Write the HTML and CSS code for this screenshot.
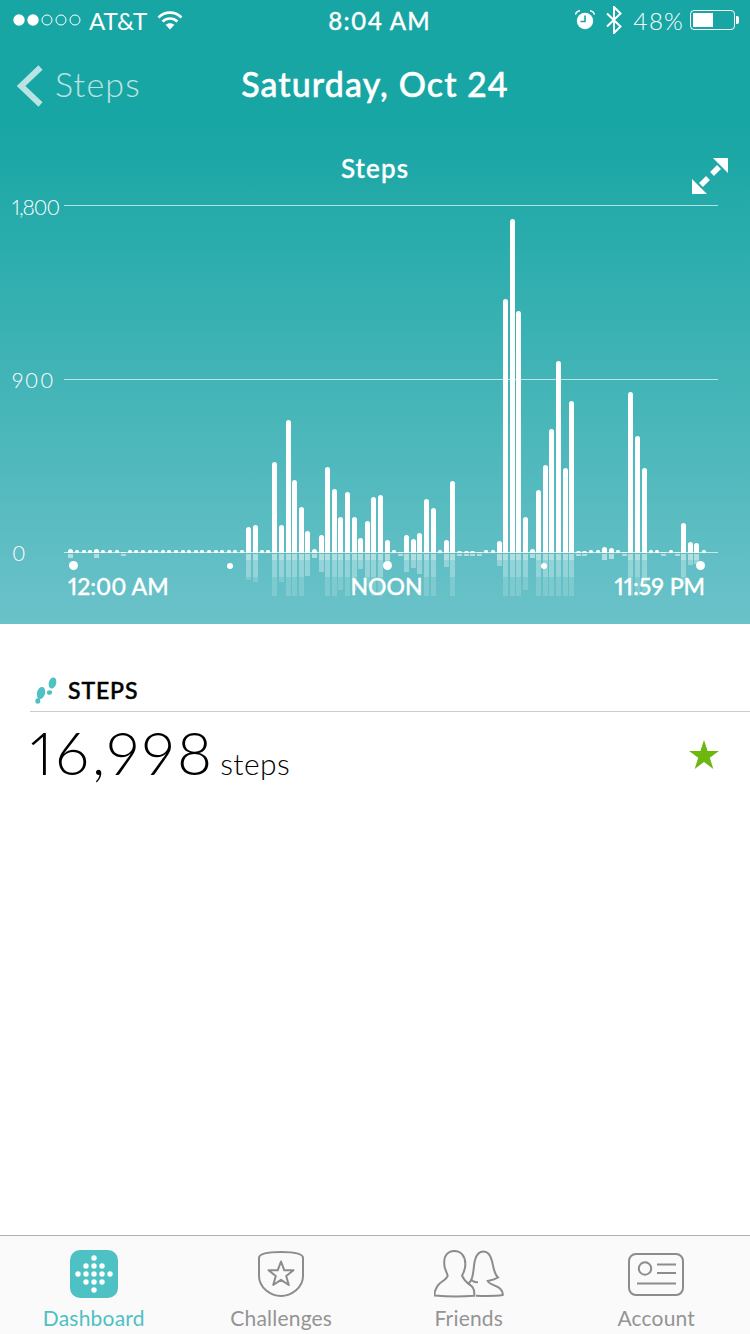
FILE: index.html
```html
<!DOCTYPE html>
<html lang="en">
<head>
    <meta charset="UTF-8">
    <meta name="viewport" content="width=device-width, initial-scale=1.0">
    <title>Steps</title>
    <link rel="stylesheet" href="styles.css">
</head>
<body>
    <header class="hero">
        <div class="status-bar">
            <div class="status-left">
                <svg class="signal" viewBox="0 0 68 12" width="68" height="12">
                    <circle cx="6" cy="6" r="5.7" fill="#fff"/>
                    <circle cx="20" cy="6" r="5.7" fill="#fff"/>
                    <circle cx="34" cy="6" r="5" fill="none" stroke="#fff" stroke-width="1"/>
                    <circle cx="48" cy="6" r="5" fill="none" stroke="#fff" stroke-width="1"/>
                    <circle cx="62" cy="6" r="5" fill="none" stroke="#fff" stroke-width="1"/>
                </svg>
                <span class="carrier">AT&amp;T</span>
                <svg class="wifi" viewBox="0 0 26 20" width="26" height="20">
                    <path d="M1.5 7.5C8 1 18 1 24.5 7.5" fill="none" stroke="#fff" stroke-width="2.6"/>
                    <path d="M5.5 11.5C9.8 7.4 16.2 7.4 20.5 11.5" fill="none" stroke="#fff" stroke-width="2.6"/>
                    <path d="M13 19.5L8.6 14.8C11 12.6 15 12.6 17.4 14.8Z" fill="#fff"/>
                </svg>
            </div>
            <span class="clock">8:04 AM</span>
            <div class="status-right">
                <svg class="alarm" viewBox="0 0 20 20" width="20" height="20">
                    <circle cx="10" cy="11" r="8.2" fill="#fff"/>
                    <path d="M10 5.5V11.5H5.5" fill="none" stroke="#18a6a4" stroke-width="1.6"/>
                    <path d="M.5 4.5C1 2 2.5 1 5 .7M19.5 4.5C19 2 17.500 1 15 .7" fill="none" stroke="#fff" stroke-width="1.5"/>
                </svg>
                <svg class="bluetooth" viewBox="0 0 16 28" width="16" height="28">
                    <path d="M1 7.500L14.500 20.500L8 27V1L14.500 7.500L1 20.500" fill="none" stroke="#fff" stroke-width="2"/>
                </svg>
                <span class="battery-text">48%</span>
                <div class="battery"><div class="battery-fill"></div></div>
            </div>
        </div>

        <nav class="nav-row">
            <a class="back">
                <svg viewBox="0 0 26 42" width="26" height="42">
                    <path d="M23.500 2.500L4 21L23.500 39.500" fill="none" stroke="#fff" stroke-width="6"/>
                </svg>
                <span>Steps</span>
            </a>
            <h1>Saturday, Oct 24</h1>
        </nav>

        <section class="chart">
            <div class="chart-head">
                <h2>Steps</h2>
                <svg class="expand" viewBox="0 0 36 36" width="36" height="36">
                    <path d="M21 0H36V15Z M15 36H0V21Z" fill="#fff"/>
                    <path d="M20 16L27 9M9 27L16 20" fill="none" stroke="#fff" stroke-width="5.500"/>
                </svg>
            </div>
            <div class="plot">
                <div class="grid-row"><span class="label-top">1,800</span><i></i></div>
                <div class="grid-row"><span class="label-mid">900</span><i></i></div>
                <div class="grid-row"><span>0</span><i></i></div>
                <div class="bars" id="bars"></div>
                <div class="reflection" id="reflection"></div>
            </div>
            <div class="ticks">
                <i class="tick-big"></i><i></i><i class="tick-big"></i><i></i><i class="tick-big"></i>
            </div>
            <div class="time-labels">
                <span>12:00 AM</span>
                <span>NOON</span>
                <span>11:59 PM</span>
            </div>
        </section>
    </header>

    <main class="details">
        <div class="details-head">
            <svg viewBox="0 0 24 28" width="24" height="28">
                <ellipse cx="7" cy="17" rx="4" ry="6.200" transform="rotate(15 7 17)" fill="#4dc1c3"/>
                <ellipse cx="3.800" cy="25" rx="2.500" ry="2.700" fill="#4dc1c3"/>
                <ellipse cx="18.500" cy="7" rx="3.700" ry="5.700" transform="rotate(15 18.500 7)" fill="#4dc1c3"/>
                <ellipse cx="15.500" cy="16.500" rx="2.600" ry="2.300" fill="#4dc1c3"/>
            </svg>
            <span>STEPS</span>
        </div>
        <div class="details-row">
            <div class="total"><strong>16,998</strong> <span>steps</span></div>
            <svg class="star" viewBox="0 0 30 30" width="30" height="30">
                <path d="M15 0L18.600 10.900H30L20.800 17.700L24.300 28.900L15 22L5.700 28.900L9.200 17.700L0 10.900H11.400Z" fill="#6db80f"/>
            </svg>
        </div>
    </main>

    <footer class="tabs">
        <a class="tab active">
            <svg viewBox="0 0 48 48" width="48" height="48">
                <rect width="48" height="48" rx="10" fill="#4dc1c3"/>
                <g fill="#fff">
                    <circle cx="24" cy="8" r="2.700"/>
                    <circle cx="16" cy="16" r="2.700"/><circle cx="24" cy="16" r="2.700"/><circle cx="32" cy="16" r="2.700"/>
                    <circle cx="8" cy="24" r="2.700"/><circle cx="16" cy="24" r="2.700"/><circle cx="24" cy="24" r="2.700"/><circle cx="32" cy="24" r="2.700"/><circle cx="40" cy="24" r="2.700"/>
                    <circle cx="16" cy="32" r="2.700"/><circle cx="24" cy="32" r="2.700"/><circle cx="32" cy="32" r="2.700"/>
                    <circle cx="24" cy="40" r="2.700"/>
                </g>
            </svg>
            <span>Dashboard</span>
        </a>
        <a class="tab">
            <svg viewBox="0 0 48 48" width="48" height="48">
                <path d="M2 8C2 3 12 2 24 2S46 3 46 8V26C46 38 34 46 24 46S2 38 2 26Z" fill="none" stroke="#8c8c8c" stroke-width="2"/>
                <path d="M24 11.500L27.300 20.300H36.500L29.200 26L31.800 35L24 29.800L16.200 35L18.800 26L11.500 20.300H20.700Z" fill="none" stroke="#8c8c8c" stroke-width="2" stroke-linejoin="round"/>
            </svg>
            <span>Challenges</span>
        </a>
        <a class="tab">
            <svg viewBox="0 0 70 48" width="70" height="48">
                <path d="M20.300 1C13.500 1 9.800 6.500 10.300 12.300C9.500 17 11.500 19 13.700 25.700C12 31 4 32 2 39C.8 41 .3 43 .8 45.500C10 46.300 30 46.500 40.300 45.700C40.500 42 40.500 39.500 38.700 37.300C36 34 31 33 28 25.700C30 22 31.500 18 31.300 14C31.500 6.500 27 1 20.300 1Z" fill="none" stroke="#8c8c8c" stroke-width="2"/>
                <path d="M33.500 34C35 33 37.500 31 38 28C40 22 39.500 15 41 10C42.500 4.500 45.500 1.500 49.500 1.500C53.500 1.500 56.500 5 58 11C59.500 17 60 24 64 27.500C60 30 56 30.500 53.700 31C55 34.500 62 35 66 38.500C68 40.500 69 43 68.700 45C62 46 50 46 42 45.700" fill="none" stroke="#8c8c8c" stroke-width="2"/>
                <path d="M38 30.500C40 32 42 32.500 44 32" fill="none" stroke="#8c8c8c" stroke-width="2"/>
            </svg>
            <span>Friends</span>
        </a>
        <a class="tab">
            <svg viewBox="0 0 56 48" width="56" height="48">
                <rect x="1" y="4" width="54" height="41" rx="7" fill="none" stroke="#8c8c8c" stroke-width="2"/>
                <circle cx="17" cy="18.500" r="6.200" fill="none" stroke="#8c8c8c" stroke-width="2"/>
                <path d="M29 14.500H48M29 23H48M9 33.500H48" fill="none" stroke="#8c8c8c" stroke-width="2"/>
            </svg>
            <span>Account</span>
        </a>
    </footer>

    <script src="script.js"></script>
</body>
</html>
```

FILE: styles.css
```css
* {
    box-sizing: border-box;
}

body {
    width: 750px;
    height: 1334px;
    margin: 0;
    display: flex;
    flex-direction: column;
    overflow: hidden;
    background-color: white;
    font-family: Lato, "Open Sans", sans-serif;
    font-variant-numeric: proportional-nums;
    color: black;
}

h1, h2 {
    margin: 0;
}

svg {
    display: block;
}

.hero {
    height: 624px;
    color: white;
    background: linear-gradient(#18a6a4 0, #18a6a4 130px, #6bc2c9 624px);
}

.status-bar {
    height: 40px;
    padding: 0 11px 0 13px;
    display: grid;
    grid-template-columns: 1fr auto 1fr;
    align-items: center;
    font-size: 24px;
}

.status-left,
.status-right {
    display: flex;
    align-items: center;
}

.status-right {
    justify-content: flex-end;
}

.carrier {
    margin-left: 8px;
}

.clock {
    margin-left: 7px;
    font-weight: 500;
    letter-spacing: 1.2px;
    -webkit-text-stroke: 0.3px white;
}

.wifi {
    margin-left: 10px;
}

.bluetooth {
    margin-left: 11px;
}

.battery-text {
    margin-left: 11px;
    font-weight: 300;
    letter-spacing: 1.2px;
}

.battery {
    position: relative;
    width: 45px;
    height: 20px;
    margin-left: 6px;
    margin-right: 4px;
    padding: 2px;
    border: 1px solid white;
    border-radius: 4px;
}

.battery::after {
    content: "";
    position: absolute;
    right: -5px;
    top: 5px;
    width: 3px;
    height: 8px;
    background: white;
    border-radius: 0 2px 2px 0;
}

.battery-fill {
    width: 20px;
    height: 100%;
    background: white;
}

.nav-row {
    position: relative;
    height: 86px;
    display: flex;
    align-items: center;
    justify-content: center;
}

.nav-row h1 {
    font-size: 34px;
    font-weight: 500;
    letter-spacing: 1.1px;
    -webkit-text-stroke: 0.5px white;
}

.back {
    position: absolute;
    left: 17px;
    top: 23px;
    display: flex;
    align-items: center;
    gap: 12px;
    font-size: 34px;
    font-weight: 300;
    letter-spacing: 1.2px;
    opacity: 0.7;
}

.back span {
    margin-bottom: 4px;
}

.chart-head {
    position: relative;
    height: 79px;
    padding-top: 25px;
    text-align: center;
}

.chart-head h2 {
    font-size: 26px;
    font-weight: 500;
    letter-spacing: 1.1px;
    line-height: 34px;
    -webkit-text-stroke: 0.4px white;
}

.expand {
    position: absolute;
    right: 22px;
    top: 32px;
}

.plot {
    position: relative;
    height: 348px;
    display: flex;
    flex-direction: column;
    justify-content: space-between;
}

.grid-row {
    height: 1px;
    margin-left: 12px;
    margin-right: 32px;
    display: flex;
    align-items: center;
    font-size: 21px;
    font-weight: 300;
}

.grid-row span {
    width: 52px;
}

.grid-row .label-top {
    padding-top: 2px;
    letter-spacing: -1px;
}

.grid-row .label-mid {
    letter-spacing: 1.5px;
}

.grid-row i {
    flex: 1;
    height: 1px;
    background: rgba(255, 255, 255, 0.65);
}

.bars,
.reflection {
    position: absolute;
    left: 68px;
    display: flex;
    gap: 1.6px;
}

.bars {
    bottom: 0;
    align-items: flex-end;
}

.reflection {
    top: 349px;
    align-items: flex-start;
}

.bars i,
.reflection i {
    width: 5px;
}

.bars i {
    background: white;
    border-radius: 2.5px 2.5px 0 0;
}

/* the little dots on the baseline are narrower than the bars */
.bars i.dot {
    width: 4px;
    margin: 0 0.5px;
    border-radius: 2px;
}

.reflection i {
    background: linear-gradient(rgba(255, 255, 255, 0.5) 6px, rgba(255, 255, 255, 0.32) 6px, rgba(255, 255, 255, 0.32) 23px, rgba(255, 255, 255, 0.16) 23px) top / 100% 42px no-repeat;
}

.ticks {
    height: 9px;
    margin-top: 8px;
    padding: 0 45px 0 69px;
    display: flex;
    justify-content: space-between;
    align-items: center;
}

.ticks i {
    width: 6px;
    height: 6px;
    border-radius: 50%;
    background: white;
}

.ticks .tick-big {
    width: 9px;
    height: 9px;
}

.time-labels {
    margin-top: 1px;
    padding: 0 45px 0 68px;
    display: grid;
    grid-template-columns: 1fr auto 1fr;
    font-size: 23px;
    font-weight: 500;
    line-height: 30px;
    -webkit-text-stroke: 0.3px white;
}

.time-labels span:last-child {
    text-align: right;
}

.details {
    flex: 1;
    padding: 50px 0 0 30px;
}

.details-head {
    height: 38px;
    padding: 0 0 6px 4px;
    display: flex;
    align-items: center;
    gap: 10px;
    border-bottom: 1px solid #cccccc;
    font-size: 23px;
    font-weight: 500;
    letter-spacing: 0.9px;
    -webkit-text-stroke: 0.5px black;
}

.details-row {
    padding: 1px 31px 0 0;
    display: flex;
    justify-content: space-between;
    align-items: center;
}

.total strong {
    font-size: 60px;
    font-weight: 300;
    letter-spacing: 3px;
    line-height: 78px;
}

.total span {
    margin-left: 1px;
    font-size: 30px;
    font-weight: 300;
    letter-spacing: 0.4px;
}

.star {
    margin-top: 6px;
}

.tabs {
    height: 99px;
    display: grid;
    grid-template-columns: repeat(4, 1fr);
    border-top: 1px solid #b3b3b3;
    background-color: #fafafa;
}

.tab {
    padding-top: 14px;
    display: flex;
    flex-direction: column;
    align-items: center;
    gap: 7px;
    font-size: 21px;
    letter-spacing: 0.2px;
    color: #949494;
}

.tab.active {
    color: #4dc1c3;
}
```

FILE: script.js
```js
// one value per 15 minutes, height in px above the baseline
const steps = [
    4, 3, 3, 3, 4, 3, 3, 3, 1, 3, 3, 3, 3, 3, 3, 3, 3, 3, 3, 3, 3, 3, 3, 3, 3, 3, 3,
    26, 28, 3, 3, 91, 28, 133, 73, 46, 22, 4, 18, 86, 64, 36, 61, 36, 15, 32, 56, 58, 13, 3, 1,
    18, 14, 20, 54, 45, 3, 13, 72, 2, 2, 2, 1, 3, 3, 12,
    254, 334, 242, 36, 4, 63, 88, 124, 192, 85, 152, 2, 2, 3, 3, 6, 5, 3, 1,
    161, 117, 85, 3, 3, 1, 3, 1, 30, 11, 10, 3
];

const bars = document.getElementById('bars');
const reflection = document.getElementById('reflection');

steps.forEach(h => {
    const bar = document.createElement('i');
    bar.style.height = `${h}px`;
    if (h === 3) bar.className = 'dot';
    bars.appendChild(bar);

    // small dots don't get a reflection, flat ones get a thin line
    const mirror = document.createElement('i');
    mirror.style.height = `${h === 3 ? 0 : Math.min(Math.max(h, 2), 42)}px`;
    reflection.appendChild(mirror);
});
```
